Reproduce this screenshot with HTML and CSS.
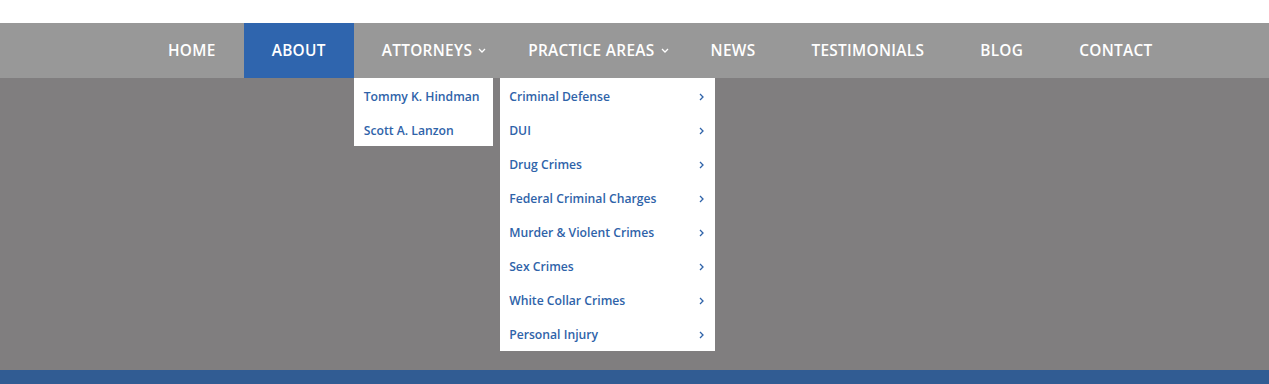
FILE: index.html
```html
<!DOCTYPE html>
<html lang="en">
<head>
<meta charset="utf-8">
<title>Navigation</title>
<link rel="stylesheet" href="styles.css">
</head>
<body>
<div class="page">
  <div class="topstrip"></div>
  <nav class="nav">
    <ul class="menu">
      <li class="item"><a class="link">HOME</a></li>
      <li class="item active"><a class="link">ABOUT</a></li>
      <li class="item has-sub">
        <a class="link">ATTORNEYS<svg class="caret" viewBox="0 0 8 5" width="8" height="5"><path d="M1 1l3 3 3-3" fill="none" stroke="#fff" stroke-width="1.3"/></svg></a>
        <ul class="sub sub-att">
          <li><a class="sublink">Tommy K. Hindman</a></li>
          <li><a class="sublink">Scott A. Lanzon</a></li>
        </ul>
      </li>
      <li class="item has-sub">
        <a class="link">PRACTICE AREAS<svg class="caret" viewBox="0 0 8 5" width="8" height="5"><path d="M1 1l3 3 3-3" fill="none" stroke="#fff" stroke-width="1.3"/></svg></a>
        <ul class="sub sub-prac">
          <li><a class="sublink">Criminal Defense<svg class="arrow" viewBox="0 0 5 8" width="5" height="8"><path d="M1 1l3 3-3 3" fill="none" stroke="#2f63a9" stroke-width="1.3"/></svg></a></li>
          <li><a class="sublink">DUI<svg class="arrow" viewBox="0 0 5 8" width="5" height="8"><path d="M1 1l3 3-3 3" fill="none" stroke="#2f63a9" stroke-width="1.3"/></svg></a></li>
          <li><a class="sublink">Drug Crimes<svg class="arrow" viewBox="0 0 5 8" width="5" height="8"><path d="M1 1l3 3-3 3" fill="none" stroke="#2f63a9" stroke-width="1.3"/></svg></a></li>
          <li><a class="sublink">Federal Criminal Charges<svg class="arrow" viewBox="0 0 5 8" width="5" height="8"><path d="M1 1l3 3-3 3" fill="none" stroke="#2f63a9" stroke-width="1.3"/></svg></a></li>
          <li><a class="sublink">Murder &amp; Violent Crimes<svg class="arrow" viewBox="0 0 5 8" width="5" height="8"><path d="M1 1l3 3-3 3" fill="none" stroke="#2f63a9" stroke-width="1.3"/></svg></a></li>
          <li><a class="sublink">Sex Crimes<svg class="arrow" viewBox="0 0 5 8" width="5" height="8"><path d="M1 1l3 3-3 3" fill="none" stroke="#2f63a9" stroke-width="1.3"/></svg></a></li>
          <li><a class="sublink">White Collar Crimes<svg class="arrow" viewBox="0 0 5 8" width="5" height="8"><path d="M1 1l3 3-3 3" fill="none" stroke="#2f63a9" stroke-width="1.3"/></svg></a></li>
          <li><a class="sublink">Personal Injury<svg class="arrow" viewBox="0 0 5 8" width="5" height="8"><path d="M1 1l3 3-3 3" fill="none" stroke="#2f63a9" stroke-width="1.3"/></svg></a></li>
        </ul>
      </li>
      <li class="item"><a class="link">NEWS</a></li>
      <li class="item"><a class="link">TESTIMONIALS</a></li>
      <li class="item"><a class="link">BLOG</a></li>
      <li class="item"><a class="link">CONTACT</a></li>
    </ul>
  </nav>
  <div class="stage"></div>
  <div class="footerbar"></div>
</div>
</body>
</html>
```
FILE: styles.css
```css
* { box-sizing: border-box; }
html, body { margin: 0; padding: 0; }
body {
  font-family: "Open Sans", "Noto Sans", sans-serif;
  background: #fff;
  width: 1269px;
  height: 384px;
  overflow: hidden;
}
.page { display: flex; flex-direction: column; height: 384px; }
.topstrip { height: 23px; background: #fff; }
.nav { height: 55px; background: #989898; position: relative; z-index: 2; }
.menu {
  list-style: none;
  margin: 0;
  padding: 0 0 0 140px;
  display: flex;
  height: 55px;
}
.item { position: relative; height: 55px; }
.link {
  display: flex;
  align-items: center;
  height: 55px;
  padding: 0 28px 1px;
  color: #fff;
  font-size: 15.4px;
  font-weight: 600;
  letter-spacing: 0.3px;
  white-space: nowrap;
}
.has-sub .link { padding-right: 14px; }
.caret { margin-left: 6px; margin-top: 1px; }
.active .link { background: #2f65ae; }
.sub {
  position: absolute;
  top: 55px;
  left: 0;
  list-style: none;
  margin: 0;
  padding: 0;
  background: #fff;
}
.sub-att { width: 139px; }
.sub-prac { width: 215px; padding-bottom: 1px; }
.sublink {
  display: flex;
  align-items: center;
  justify-content: space-between;
  height: 34px;
  padding: 2px 10px 0 10px;
  color: #2f63a9;
  font-size: 12.2px;
  font-weight: 600;
  white-space: nowrap;
}
.sub-prac .sublink { padding: 2px 11px 0 9px; }
.arrow { margin-top: 1px; }
.stage { flex: 1; background: #807e7f; }
.footerbar { height: 14px; background: #315c93; }
```
